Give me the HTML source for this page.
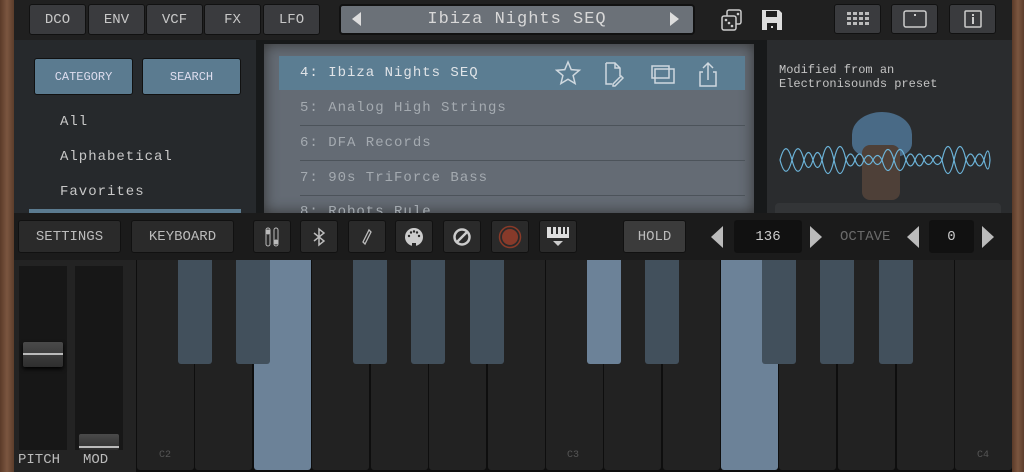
<!DOCTYPE html>
<html><head><meta charset="utf-8"><style>
*{margin:0;padding:0;box-sizing:border-box}
body{width:1024px;height:472px;overflow:hidden;background:#1e1e1e;font-family:"Liberation Mono",monospace;position:relative}
.a{position:absolute}
.btn{position:absolute;background:#3a3b3e;border:1px solid #111;border-radius:3px;color:#c8c8c8;font-size:14px;display:flex;align-items:center;justify-content:center}
.tb{position:absolute;background:#2a2a2a;border:1px solid #111;border-radius:3px;color:#bbb;font-size:14px;display:flex;align-items:center;justify-content:center;top:220px;height:33px}
.row{position:absolute;left:300px;font-size:14px;color:#a4aab0;letter-spacing:1px}
.sep{position:absolute;left:300px;width:445px;height:1px;background:#4c535a}
.wk{position:absolute;top:260px;height:210px;width:57px;background:#222;border-radius:0 0 3px 3px}
.bk{position:absolute;top:260px;height:104px;width:34px;background:#42505c;border-radius:0 0 3px 3px}
.lab{position:absolute;font-size:10px;color:#555;top:450px}
</style></head><body>
<div class="a" style="left:0;top:0;width:14px;height:472px;background:linear-gradient(90deg,#5a3a28,#7b5640,#5c3d2b)"></div>
<div class="a" style="left:1012px;top:0;width:12px;height:472px;background:linear-gradient(90deg,#5a3a28,#7b5640,#5c3d2b)"></div>
<div class="a" style="left:14px;top:0;width:998px;height:40px;background:#202020"></div>
<div class="btn" style="left:29px;top:4px;width:57px;height:31px">DCO</div>
<div class="btn" style="left:88px;top:4px;width:57px;height:31px">ENV</div>
<div class="btn" style="left:146px;top:4px;width:57px;height:31px">VCF</div>
<div class="btn" style="left:204px;top:4px;width:57px;height:31px">FX</div>
<div class="btn" style="left:263px;top:4px;width:57px;height:31px">LFO</div>
<div class="a" style="left:339px;top:4px;width:356px;height:31px;background:#6b7178;border:2px solid #111;border-radius:4px;color:#d8d8d8;font-size:17px;text-align:center;line-height:27px;letter-spacing:1px">Ibiza Nights SEQ</div>
<div class="a" style="left:352px;top:12px;width:0;height:0;border-right:9px solid #ddd;border-top:7px solid transparent;border-bottom:7px solid transparent"></div>
<div class="a" style="left:670px;top:12px;width:0;height:0;border-left:9px solid #ddd;border-top:7px solid transparent;border-bottom:7px solid transparent"></div>
<svg class="a" style="left:720px;top:8px" width="24" height="24" viewBox="0 0 24 24"><rect x="7" y="2" width="14" height="14" rx="2" fill="#2a2a2a" stroke="#ccc" stroke-width="1.5"/><rect x="2" y="8" width="14" height="14" rx="2" fill="#2a2a2a" stroke="#ccc" stroke-width="1.5"/><circle cx="6" cy="12" r="1.3" fill="#ccc"/><circle cx="9" cy="15" r="1.3" fill="#ccc"/><circle cx="12" cy="18" r="1.3" fill="#ccc"/><circle cx="18" cy="6" r="1.3" fill="#ccc"/></svg>
<svg class="a" style="left:760px;top:8px" width="24" height="24" viewBox="0 0 24 24"><path d="M2 2h17l3 3v17H2z" fill="#ddd"/><rect x="6" y="3" width="11" height="6" fill="#202020"/><rect x="7" y="15" width="10" height="7" fill="#202020"/><rect x="11" y="18" width="2" height="2" fill="#ddd"/></svg>
<div class="btn" style="left:834px;top:4px;width:47px;height:30px"><svg width="22" height="14"><g fill="#bbb"><rect x="0" y="0" width="4" height="3"/><rect x="6" y="0" width="4" height="3"/><rect x="12" y="0" width="4" height="3"/><rect x="18" y="0" width="4" height="3"/><rect x="0" y="5" width="4" height="3"/><rect x="6" y="5" width="4" height="3"/><rect x="12" y="5" width="4" height="3"/><rect x="18" y="5" width="4" height="3"/><rect x="0" y="10" width="4" height="3"/><rect x="6" y="10" width="4" height="3"/><rect x="12" y="10" width="4" height="3"/><rect x="18" y="10" width="4" height="3"/></g></svg></div>
<div class="btn" style="left:891px;top:4px;width:47px;height:30px"><svg width="24" height="18"><rect x="1" y="1" width="22" height="16" rx="2" fill="none" stroke="#ccc" stroke-width="1.5"/><rect x="11" y="4" width="2" height="2" fill="#ccc"/></svg></div>
<div class="btn" style="left:949px;top:4px;width:47px;height:30px"><svg width="18" height="18"><rect x="1" y="1" width="16" height="16" rx="1" fill="none" stroke="#ccc" stroke-width="1.5"/><rect x="8" y="4" width="2" height="2" fill="#ccc"/><rect x="8" y="7" width="2" height="7" fill="#ccc"/></svg></div>

<div class="a" style="left:14px;top:40px;width:242px;height:173px;background:#26292c"></div>
<div class="btn" style="left:34px;top:58px;width:99px;height:37px;background:#5b7b90;color:#dde;font-size:12px">CATEGORY</div>
<div class="btn" style="left:142px;top:58px;width:99px;height:37px;background:#5b7b90;color:#dde;font-size:12px">SEARCH</div>
<div class="a" style="left:60px;top:114px;color:#c8c8c8;font-size:14px;letter-spacing:1px">All</div>
<div class="a" style="left:60px;top:149px;color:#c8c8c8;font-size:14px;letter-spacing:1px">Alphabetical</div>
<div class="a" style="left:60px;top:184px;color:#c8c8c8;font-size:14px;letter-spacing:1px">Favorites</div>
<div class="a" style="left:29px;top:209px;width:212px;height:4px;background:#5b7b90"></div>

<div class="a" style="left:256px;top:40px;width:511px;height:173px;background:#17191a"></div>
<div class="a" style="left:264px;top:44px;width:490px;height:169px;background:#646b74;box-shadow:inset 0 0 14px #333"></div>
<div class="a" style="left:279px;top:56px;width:466px;height:34px;background:#5b7d92"></div>
<div class="row" style="top:65px;color:#e0e4e8">4: Ibiza Nights SEQ</div>
<svg class="a" style="left:555px;top:60px" width="165" height="28" viewBox="0 0 165 28" fill="none" stroke="#cfd8df" stroke-width="1.5"><path d="M13 2l3.2 7.6 8.2.6-6.3 5.3 2 8-7.1-4.3-7.1 4.3 2-8-6.3-5.3 8.2-.6z"/><path d="M51 3h9l5 5v8M51 3v21h6M60 3v5h5M58 24l8-8 2 2-8 8h-2z"/><rect x="97" y="6" width="17" height="12"/><rect x="100" y="9" width="19" height="14"/><path d="M148 12h-3v14h16V12h-3M153 20V3M148 8l5-5 5 5"/></svg>
<div class="row" style="top:100px">5: Analog High Strings</div>
<div class="sep" style="top:125px"></div>
<div class="row" style="top:135px">6: DFA Records</div>
<div class="sep" style="top:160px"></div>
<div class="row" style="top:170px">7: 90s TriForce Bass</div>
<div class="sep" style="top:195px"></div>
<div class="row" style="top:204px;height:9px;overflow:hidden">8: Robots Rule</div>

<div class="a" style="left:767px;top:40px;width:245px;height:173px;background:#2a2c2e"></div>
<div class="a" style="left:779px;top:63px;color:#c4c4c4;font-size:12px;line-height:14px">Modified from an<br>Electronisounds preset</div>
<div class="a" style="left:852px;top:112px;width:60px;height:45px;background:#4f7595;border-radius:50% 50% 30% 30%;opacity:.85"></div>
<div class="a" style="left:862px;top:145px;width:38px;height:55px;background:#4e4038;border-radius:8px"></div>
<svg class="a" style="left:778px;top:140px" width="215" height="40" viewBox="0 0 215 40" fill="none" stroke="#6cb3d8" stroke-width="1.2"><path d="M2 20 C6 5 10 5 14 20 C18 35 22 35 26 20 C29 10 32 10 35 20 C38 30 41 30 44 20 C48 2 52 2 56 20 C60 38 64 38 68 20 C71 12 74 12 77 20 C80 28 83 28 86 20 C89 14 92 14 95 20 C98 26 101 26 104 20 C108 6 112 6 116 20 C120 34 124 34 128 20 C131 12 134 12 137 20 C140 28 143 28 146 20 C149 14 152 14 155 20 C158 26 161 26 164 20 C168 2 172 2 176 20 C180 38 184 38 188 20 C191 12 194 12 197 20 C200 28 203 28 206 20 C209 8 211 8 212 20"/><path d="M2 20 C6 35 10 35 14 20 C18 5 22 5 26 20 C29 30 32 30 35 20 C38 10 41 10 44 20 C48 38 52 38 56 20 C60 2 64 2 68 20 C71 28 74 28 77 20 C80 12 83 12 86 20 C89 26 92 26 95 20 C98 14 101 14 104 20 C108 34 112 34 116 20 C120 6 124 6 128 20 C131 28 134 28 137 20 C140 12 143 12 146 20 C149 26 152 26 155 20 C158 14 161 14 164 20 C168 38 172 38 176 20 C180 2 184 2 188 20 C191 28 194 28 197 20 C200 12 203 12 206 20 C209 32 211 32 212 20"/></svg>
<div class="a" style="left:775px;top:203px;width:226px;height:10px;background:#333537;border-radius:4px 4px 0 0"></div>

<div class="a" style="left:14px;top:213px;width:998px;height:47px;background:#1b1b1b"></div>
<div class="tb" style="left:18px;width:103px">SETTINGS</div>
<div class="tb" style="left:131px;width:103px">KEYBOARD</div>
<div class="tb" style="left:253px;width:38px"><svg width="14" height="20" fill="none" stroke="#bbb"><rect x="1" y="1" width="4" height="18" rx="2"/><rect x="9" y="1" width="4" height="18" rx="2"/><circle cx="3" cy="5" r="2" fill="#bbb"/><circle cx="11" cy="15" r="2" fill="#bbb"/></svg></div>
<div class="tb" style="left:300px;width:38px"><svg width="12" height="20" fill="none" stroke="#bbb" stroke-width="1.5"><path d="M1 6l10 8-5 4V2l5 4L1 14"/></svg></div>
<div class="tb" style="left:348px;width:38px"><svg width="12" height="18" fill="none" stroke="#bbb" stroke-width="1.3"><path d="M4 16l-2-2 6-12 2 2z"/></svg></div>
<div class="tb" style="left:395px;width:38px"><svg width="20" height="20"><circle cx="10" cy="10" r="9" fill="#ccc"/><g fill="#2a2a2a"><circle cx="5" cy="9" r="1.2"/><circle cx="15" cy="9" r="1.2"/><circle cx="7" cy="5.5" r="1.2"/><circle cx="13" cy="5.5" r="1.2"/><circle cx="10" cy="4.5" r="1.2"/><rect x="8" y="16" width="4" height="3"/></g></svg></div>
<div class="tb" style="left:443px;width:38px"><svg width="20" height="20" fill="none" stroke="#ccc" stroke-width="2.5"><circle cx="10" cy="10" r="7.5"/><path d="M5 15L15 5"/></svg></div>
<div class="tb" style="left:491px;width:38px"><svg width="24" height="24"><circle cx="12" cy="12" r="10.5" fill="none" stroke="#8a3a28" stroke-width="1.5"/><circle cx="12" cy="12" r="8" fill="#873a2a"/></svg></div>
<div class="tb" style="left:539px;width:38px"><svg width="24" height="22"><rect x="1" y="1" width="22" height="11" fill="#ddd"/><g fill="#2a2a2a"><rect x="5" y="1" width="2" height="7"/><rect x="10" y="1" width="2" height="7"/><rect x="15" y="1" width="2" height="7"/><rect x="19" y="1" width="2" height="7"/></g><path d="M7 15h10l-5 5z" fill="#ccc"/></svg></div>
<div class="tb" style="left:623px;width:63px;background:#3b3b3b">HOLD</div>
<div class="a" style="left:711px;top:226px;width:0;height:0;border-right:12px solid #bbb;border-top:11px solid transparent;border-bottom:11px solid transparent"></div>
<div class="tb" style="left:734px;width:68px;background:#111;color:#ccc">136</div>
<div class="a" style="left:810px;top:226px;width:0;height:0;border-left:12px solid #bbb;border-top:11px solid transparent;border-bottom:11px solid transparent"></div>
<div class="a" style="left:840px;top:229px;color:#6a6a6a;font-size:14px">OCTAVE</div>
<div class="a" style="left:907px;top:226px;width:0;height:0;border-right:12px solid #bbb;border-top:11px solid transparent;border-bottom:11px solid transparent"></div>
<div class="tb" style="left:929px;width:45px;background:#111;color:#ccc">0</div>
<div class="a" style="left:982px;top:226px;width:0;height:0;border-left:12px solid #bbb;border-top:11px solid transparent;border-bottom:11px solid transparent"></div>

<div class="a" style="left:14px;top:260px;width:122px;height:212px;background:#232323"></div>
<div class="a" style="left:19px;top:266px;width:48px;height:184px;background:#171717"></div>
<div class="a" style="left:75px;top:266px;width:48px;height:184px;background:#171717"></div>
<div class="a" style="left:23px;top:342px;width:40px;height:25px;background:linear-gradient(#4a4a4a,#2e2e2e);border-radius:2px;box-shadow:0 2px 4px #000"><div style="margin-top:11px;height:2px;background:#bbb"></div></div>
<div class="a" style="left:79px;top:434px;width:40px;height:16px;background:linear-gradient(#4a4a4a,#2e2e2e);border-radius:2px"><div style="margin-top:12px;height:2px;background:#bbb"></div></div>
<div class="a" style="left:18px;top:452px;color:#bbb;font-size:14px">PITCH</div>
<div class="a" style="left:83px;top:452px;color:#bbb;font-size:14px">MOD</div>

<div class="a" style="left:136px;top:260px;width:876px;height:212px;background:#0e0e0e"></div>
<div class="wk" style="left:137px"></div><div class="wk" style="left:195px"></div><div class="wk" style="left:254px;background:#6c8298"></div><div class="wk" style="left:312px"></div><div class="wk" style="left:371px"></div><div class="wk" style="left:429px"></div><div class="wk" style="left:488px"></div><div class="wk" style="left:546px"></div><div class="wk" style="left:604px"></div><div class="wk" style="left:663px"></div><div class="wk" style="left:721px;background:#6c8298"></div><div class="wk" style="left:779px"></div><div class="wk" style="left:838px"></div><div class="wk" style="left:897px"></div><div class="wk" style="left:955px"></div>
<div class="bk" style="left:178px"></div><div class="bk" style="left:236px"></div><div class="bk" style="left:353px"></div><div class="bk" style="left:411px"></div><div class="bk" style="left:470px"></div><div class="bk" style="left:587px;background:#6c8298"></div><div class="bk" style="left:645px"></div><div class="bk" style="left:762px"></div><div class="bk" style="left:820px"></div><div class="bk" style="left:879px"></div>
<div class="lab" style="left:159px">C2</div><div class="lab" style="left:567px">C3</div><div class="lab" style="left:977px">C4</div>
</body></html>
